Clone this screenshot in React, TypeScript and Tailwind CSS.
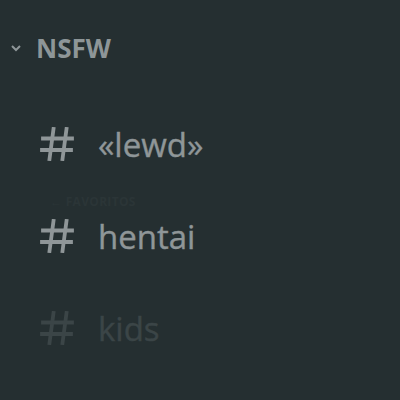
import React from "react";

function Hash({ className }: { className: string }) {
  return (
    <svg viewBox="0 0 34 34" className={className} fill="none" stroke="currentColor" strokeWidth="3.8" strokeLinecap="square">
      <path d="M13.5 2 L9.5 32" />
      <path d="M26.5 2 L22.5 32" />
      <path d="M3 11.5 H32" />
      <path d="M2 23 H31" />
    </svg>
  );
}

function Channel({ name, muted }: { name: string; muted?: boolean }) {
  return (
    <div className={`flex h-[44px] items-center gap-[24px] pl-[40px] ${muted ? "text-[#3b4547]" : "text-[#8f9698]"}`}>
      <Hash className="h-[34px] w-[34px]" />
      <span className="text-[33px] leading-none [-webkit-text-stroke:0.4px_currentColor]">{name}</span>
    </div>
  );
}

export default function App() {
  return (
    <div className="flex h-[400px] w-[400px] flex-col overflow-hidden bg-[#252f31] font-['Open_Sans',sans-serif]">
      <div className="flex items-center gap-[15px] pl-[11px] pt-[36px] text-[#8e9698]">
        <svg viewBox="0 0 10 8" className="h-[8px] w-[10px]" fill="none" stroke="currentColor" strokeWidth="2">
          <path d="M1 2 L5 6 L9 2" />
        </svg>
        <span className="text-[26px] font-bold leading-[24px]">NSFW</span>
      </div>
      <div className="mt-[62px]">
        <Channel name="«lewd»" />
      </div>
      <div className="mt-[27px] pl-[50px] text-[12px] font-bold uppercase tracking-wide text-[#2b3537]">
        ← favoritos
      </div>
      <div className="mt-[3px]">
        <Channel name="hentai" />
      </div>
      <div className="mt-[48px]">
        <Channel name="kids" muted />
      </div>
    </div>
  );
}
